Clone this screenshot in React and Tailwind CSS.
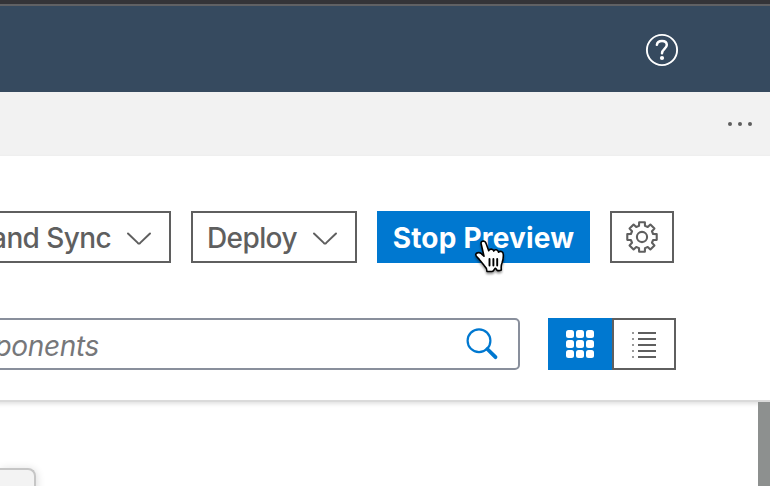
import React from "react";

function Chevron() {
  return (
    <svg className="mt-[3px] shrink-0" width="26" height="14" viewBox="0 0 26 14" fill="none" stroke="#5f5f5f" strokeWidth="2" strokeLinecap="round" strokeLinejoin="round">
      <path d="M2 1.5L11.8 10.9Q13 12 14.2 10.9L24 1.5" />
    </svg>
  );
}

function HelpIcon() {
  return (
    <svg width="34" height="34" viewBox="0 0 34 34" fill="none" stroke="white">
      <circle cx="17" cy="17" r="15.1" strokeWidth="1.9" />
      <path d="M11.9 11.8C12.2 9.2 14 8 17 8C20 8 21.8 9.7 21.8 12C21.8 15.6 17 16.2 17 20.2" strokeWidth="2.5" strokeLinecap="round" />
      <circle cx="17" cy="25" r="2.1" fill="white" stroke="none" />
    </svg>
  );
}

const teeth = [0, 45, 90, 135, 180, 225, 270, 315];

function gearPath() {
  const point = (r, deg) => {
    const a = ((deg - 90) * Math.PI) / 180;
    return `${(17 + r * Math.cos(a)).toFixed(2)} ${(17 + r * Math.sin(a)).toFixed(2)}`;
  };
  return (
    teeth
      .map((t, i) => `${i ? "L" : "M"}${point(11.5, t - 15)}L${point(15, t - 11)}L${point(15, t + 11)}L${point(11.5, t + 15)}`)
      .join("") + "Z"
  );
}

function GearIcon() {
  return (
    <svg width="34" height="34" viewBox="0 0 34 34" fill="none" stroke="#5f5f5f" strokeWidth="2.1" strokeLinejoin="round">
      <path d={gearPath()} />
      <circle cx="17" cy="17" r="5.1" />
    </svg>
  );
}

function HandCursor() {
  return (
    <svg className="absolute left-[88px] top-[19px] drop-shadow-[0_2px_1px_rgba(0,0,0,0.4)]" width="50" height="50" viewBox="0 0 50 50" stroke="black" strokeWidth="1.6" strokeLinejoin="round" strokeLinecap="round">
      <path fill="white" d="M16.3 14.5C15.6 12.4 16.5 11.1 18.2 11C19.8 11 20.6 12 21.2 13.7L23.7 20.7C24.2 18.8 28 18.3 28.8 21.1C29.5 19 33 19.2 33.5 22.2C35 20.8 38.2 21.2 38.3 24.5C38.5 28.5 38.3 30 37 33C35.8 35.5 36.1 37 36.3 40C34.8 40.7 33 40.8 32 40.2C31.5 39.5 31 38.4 30.3 38.2C29.5 38.5 28.8 41.5 27 41.5L22 41.4C22 38.6 21.2 37.4 19.2 35.6L14.5 29.8C13 27.8 10.5 26.3 10.7 24.5C11.2 22.2 14.8 22 16.5 23.8L19 26.2Z" />
      <path fill="none" strokeWidth="1.9" d="M24.5 29V35.5M28.4 29V35.5M32.2 29V35.5" />
    </svg>
  );
}

const cells = [0, 1, 2, 3, 4, 5, 6, 7, 8];
const rows = [0, 1, 2, 3, 4];

export default function App() {
  return (
    <div className="flex h-[486px] w-[770px] flex-col overflow-hidden bg-white font-['Inter','Liberation_Sans',sans-serif] text-[28px] text-[#5f5f5f]">
      <div className="h-1 shrink-0 bg-[#343438]" />
      <header className="flex h-[88px] shrink-0 items-center justify-end border-t-2 border-[#606164] bg-[#364a5f] pr-[91px] pt-[2px]">
        <HelpIcon />
      </header>
      <div className="flex h-16 shrink-0 items-center justify-end gap-[6px] bg-[#f2f2f2] pr-[18px]">
        <i className="size-1 rounded-full bg-[#5f5f5f]" />
        <i className="size-1 rounded-full bg-[#5f5f5f]" />
        <i className="size-1 rounded-full bg-[#5f5f5f]" />
      </div>
      <main className="-mx-2 flex h-[246px] shrink-0 flex-col border-b-2 border-[#dadada] px-2 pt-[55px] shadow-[0_2px_4px_rgba(0,0,0,0.12)]">
        <div className="flex h-[52px] justify-end gap-5 pr-24">
          <button className="flex w-[250px] shrink-0 items-center justify-end whitespace-nowrap border-2 border-[#5f5f5f] pr-[17px]">
            <span className="mr-[15px] pt-[2px] font-[450] tracking-[-0.6px]">and Sync</span>
            <Chevron />
          </button>
          <button className="flex w-[166px] shrink-0 items-center justify-between border-2 border-[#5f5f5f] pl-[14px] pr-[17px]">
            <span className="pt-[2px] font-[450] tracking-[-0.6px]">Deploy</span>
            <Chevron />
          </button>
          <button className="relative flex w-[213px] shrink-0 items-center justify-center whitespace-nowrap bg-[#0078d0] font-bold text-white">
            <span className="pt-[2px] tracking-[0.2px]">Stop Preview</span>
            <HandCursor />
          </button>
          <button className="flex w-16 shrink-0 items-center justify-center border-2 border-[#5f5f5f]">
            <GearIcon />
          </button>
        </div>
        <div className="mt-[55px] flex h-[52px] justify-end pr-[94px]">
          <div className="flex w-[680px] shrink-0 items-center justify-between rounded-[5px] border-2 border-[#898f9c] pr-[19px]">
            <span className="w-[257px] whitespace-nowrap pt-[3px] text-right text-[28px] italic tracking-[-0.35px] text-[#76777a]">ponents</span>
            <svg width="34" height="34" viewBox="0 0 34 34" fill="none" stroke="#0078d0">
              <circle cx="14" cy="13.7" r="11.4" strokeWidth="2.2" />
              <path d="M22.3 22L30.5 30.2" strokeWidth="3.8" strokeLinecap="round" />
            </svg>
          </div>
          <div className="ml-7 flex w-32 shrink-0">
            <div className="flex w-16 items-center justify-center bg-[#0078d0]">
              <div className="grid grid-cols-3 gap-[2.5px]">
                {cells.map((c) => (
                  <i key={c} className="size-[7.8px] rounded-[2.5px] bg-white" />
                ))}
              </div>
            </div>
            <div className="flex w-16 flex-col justify-center gap-1 border-2 border-[#5f5f5f] pl-[18px] pt-[2px]">
              {rows.map((r) => (
                <div key={r} className="flex h-[2px] gap-1">
                  <i className="w-[2px] bg-[#999]" />
                  <i className="w-[18px] bg-[#5f5f5f]" />
                </div>
              ))}
            </div>
          </div>
        </div>
      </main>
      <section className="flex h-[84px] justify-between">
        <div className="mt-[66px] h-16 w-9 rounded-tr-[8px] border-r-2 border-t-2 border-[#c6c6c6] bg-[#f3f3f3] shadow-[1px_1px_8px_rgba(0,0,0,0.14)]" />
        <div className="w-3 bg-[#8d908f]" />
      </section>
    </div>
  );
}
